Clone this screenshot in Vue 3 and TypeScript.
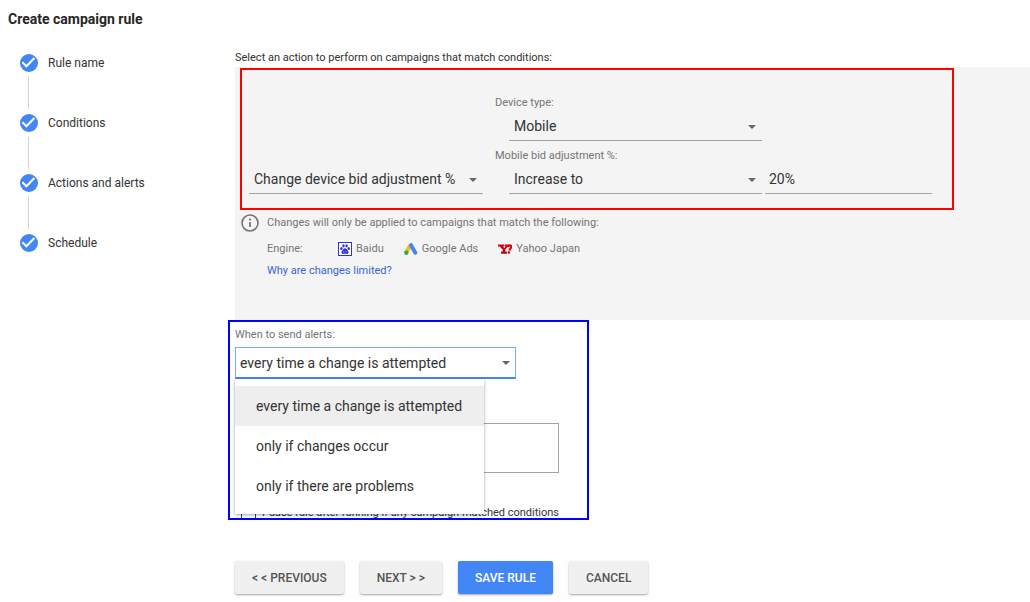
<script setup lang="ts">
import { ref } from 'vue'

const steps: string[] = ['Rule name', 'Conditions', 'Actions and alerts', 'Schedule']
const actions: string[] = ['Change device bid adjustment %']
const devices: string[] = ['Mobile', 'Desktop', 'Tablet']
const directions: string[] = ['Increase to', 'Decrease to']
const alertOptions: string[] = [
  'every time a change is attempted',
  'only if changes occur',
  'only if there are problems',
]

const action = ref(actions[0])
const device = ref(devices[0])
const direction = ref(directions[0])
const adjustment = ref('20%')
const alertTiming = ref(alertOptions[0])
const recipients = ref('')
const pauseRule = ref(false)
const menuOpen = ref(true)

function choose(option: string): void {
  alertTiming.value = option
  menuOpen.value = false
}
</script>

<template>
  <div class="page">
    <h1 class="title">Create campaign rule</h1>
    <div class="layout">
      <nav aria-label="Steps">
        <ol class="steps">
          <li v-for="step in steps" :key="step" class="step">
            <svg class="tick" viewBox="0 0 18 18" aria-hidden="true">
              <circle cx="9" cy="9" r="9" fill="#4285f4" />
              <path d="M2.4 8.3 6.4 12.3 14.4 4" fill="none" stroke="#fff" stroke-width="2" />
            </svg>
            <span>{{ step }}</span>
          </li>
        </ol>
      </nav>

      <form class="main" @submit.prevent>
        <p class="intro">Select an action to perform on campaigns that match conditions:</p>
        <section class="panel">
          <div class="action-box">
            <div class="drop action-drop">
              <select v-model="action" class="control" aria-label="Action">
                <option v-for="item in actions" :key="item">{{ item }}</option>
              </select>
            </div>
            <div class="fields">
              <label class="caption" for="device">Device type:</label>
              <div class="field-row">
                <div class="drop field-drop">
                  <select id="device" v-model="device" class="control">
                    <option v-for="item in devices" :key="item">{{ item }}</option>
                  </select>
                </div>
              </div>
              <label class="caption second" for="direction">Mobile bid adjustment %:</label>
              <div class="field-row">
                <div class="drop field-drop">
                  <select id="direction" v-model="direction" class="control">
                    <option v-for="item in directions" :key="item">{{ item }}</option>
                  </select>
                </div>
                <input v-model="adjustment" class="control percent" type="text" aria-label="Adjustment percent" />
              </div>
            </div>
          </div>

          <div class="notice">
            <svg class="info" viewBox="0 0 18 18" aria-hidden="true">
              <circle cx="9" cy="9" r="8" fill="none" stroke="#757575" stroke-width="1.6" />
              <path d="M9 8v5" stroke="#757575" stroke-width="1.8" />
              <circle cx="9" cy="5.5" r="1.1" fill="#757575" />
            </svg>
            <div class="notice-text">
              <p>Changes will only be applied to campaigns that match the following:</p>
              <div class="engines">
                <span class="engine-label">Engine:</span>
                <span class="engine">
                  <svg class="logo" viewBox="0 0 14 14" aria-hidden="true">
                    <rect x=".5" y=".5" width="13" height="13" fill="#fff" stroke="#2932e1" />
                    <g fill="#2932e1">
                      <ellipse cx="3.4" cy="6.4" rx="1.2" ry="1.5" />
                      <ellipse cx="5.5" cy="3.8" rx="1.2" ry="1.6" />
                      <ellipse cx="8.6" cy="3.8" rx="1.2" ry="1.6" />
                      <ellipse cx="10.7" cy="6.4" rx="1.2" ry="1.5" />
                      <path d="M7 6.3c1.5 0 1.7 1.3 2.7 2.2 1.3 1.2 1.2 3.3-.7 3.4-.8 0-1.2-.2-2-.2s-1.2.2-2 .2c-1.9-.1-2-2.2-.7-3.4C5.3 7.6 5.5 6.3 7 6.3z" />
                    </g>
                    <path d="M5.8 9.2v1.2M8 9.2v1.2" stroke="#fff" stroke-width=".6" />
                  </svg>
                  Baidu
                </span>
                <span class="engine">
                  <svg class="logo" viewBox="0 0 14 12" aria-hidden="true">
                    <path d="M6.3 2.3 2.5 9" stroke="#fbbc04" stroke-width="4" />
                    <path d="M7 2.2 11.3 9.7" stroke="#4285f4" stroke-width="4" stroke-linecap="round" />
                    <circle cx="2.3" cy="9.7" r="2.2" fill="#34a853" />
                  </svg>
                  Google Ads
                </span>
                <span class="engine">
                  <svg class="logo" viewBox="0 0 15 10" aria-hidden="true">
                    <path d="M0 .3h6.5v2H5.3l1.4 1.600L8.3 2.3H7.2V.3h4.6v2h-1.2L7.900 5.5v2.200H9.5v2H3.3v-2H5V5.600L1.800 2.300H0z" fill="#d8000c" />
                    <path d="M11.2 2.9C11.3.5 14.5.5 14.2 2.9 14.1 4.4 12.5 4.6 12.2 6.7" fill="none" stroke="#e0000c" stroke-width="2.2" />
                    <circle cx="11.6" cy="8.7" r="1.3" fill="#b00010" />
                    <path d="M3.3 9.3h6.2" stroke="#4b2020" />
                  </svg>
                  Yahoo Japan
                </span>
              </div>
              <a href="#limited">Why are changes limited?</a>
            </div>
          </div>
        </section>

        <section class="alerts">
          <label class="caption" for="alert-timing">When to send alerts:</label>
          <div class="alert-picker">
            <div class="drop alert-drop">
              <select id="alert-timing" v-model="alertTiming" class="control">
                <option v-for="option in alertOptions" :key="option">{{ option }}</option>
              </select>
            </div>
            <ul v-if="menuOpen" class="menu">
              <li v-for="option in alertOptions" :key="option">
                <button
                  type="button"
                  class="menu-item"
                  :class="{ selected: option === alertTiming }"
                  @click="choose(option)"
                >{{ option }}</button>
              </li>
            </ul>
          </div>
          <textarea v-model="recipients" class="recipients" aria-label="Alert recipients"></textarea>
          <label class="pause">
            <input v-model="pauseRule" type="checkbox" />
            <span>Pause rule after running if any campaign matched conditions</span>
          </label>
        </section>

        <div class="buttons">
          <button type="button">&lt; &lt; PREVIOUS</button>
          <button type="button">NEXT &gt; &gt;</button>
          <button type="submit" class="primary">SAVE RULE</button>
          <button type="button">CANCEL</button>
        </div>
      </form>
    </div>
  </div>
</template>

<style>
body {
  margin: 0;
  background: #fefefe;
}
</style>

<style scoped>
.page,
.page * {
  box-sizing: border-box;
}

.page {
  font-family: Roboto, "Liberation Sans", sans-serif;
  font-size: 12px;
  line-height: 16px;
  color: #333;
}

.title {
  margin: 0;
  padding: 11px 8px 0;
  font-size: 14px;
  line-height: 16px;
  font-weight: 700;
  color: #262626;
}

.layout {
  display: grid;
  grid-template-columns: 235px 1fr;
  padding-top: 23px;
}

.steps {
  list-style: none;
  margin: 0;
  padding: 4px 0 0 20px;
}

.step {
  display: grid;
  grid-template-columns: 18px 1fr;
  column-gap: 10px;
  align-items: center;
  font-size: 12px;
  line-height: 18px;
}

.step:not(:last-child)::after {
  content: "";
  width: 1px;
  height: 32px;
  margin: 5px 0 5px 8px;
  background: #d4d4d4;
}

.tick {
  display: block;
  width: 18px;
  height: 18px;
}

.intro {
  margin: 0;
  padding-bottom: 1px;
  font-size: 11px;
}

.panel {
  padding: 1px 0 41px 5px;
  background: #f4f4f4;
}

.action-box {
  display: flex;
  align-items: flex-end;
  gap: 12px;
  margin-right: 76px;
  padding: 25px 7px 14px;
  border: 2px solid #f00;
}

.caption {
  display: block;
  font-size: 11px;
  color: #757575;
}

.second {
  margin-top: 7px;
}

.control {
  display: block;
  width: 100%;
  height: 30px;
  margin: 0;
  padding: 0 5px;
  border: 0;
  border-bottom: 1px solid #a3a3a3;
  border-radius: 0;
  outline: none;
  appearance: none;
  background: transparent;
  color: #333;
  font-family: inherit;
  font-size: 14px;
}

.drop {
  position: relative;
}

.drop::after {
  content: "";
  position: absolute;
  top: 14px;
  right: 6px;
  border: 4px solid transparent;
  border-top-color: #666;
  border-bottom: 0;
  pointer-events: none;
}

.action-drop {
  width: 234px;
}

.field-row {
  display: flex;
  gap: 3px;
  padding-left: 14px;
}

.field-drop {
  width: 253px;
}

.percent {
  width: 167px;
  padding: 0 4px;
}

.notice {
  display: flex;
  gap: 8px;
  padding: 4px 0 0 1px;
  color: #757575;
}

.info {
  width: 18px;
  height: 18px;
}

.notice-text {
  padding-top: 1px;
}

.notice-text p {
  margin: 0;
  font-size: 11px;
}

.engines {
  display: flex;
  gap: 20px;
  padding: 10px 0 6px;
  font-size: 11px;
}

.engine-label {
  width: 51px;
}

.engine {
  display: flex;
  align-items: center;
  gap: 4px;
}

.logo {
  width: 14px;
  height: 14px;
}

a {
  display: block;
  font-size: 11px;
  color: #3367d6;
  text-decoration: none;
}

.alerts {
  width: 361px;
  height: 200px;
  margin-left: -7px;
  padding: 5px 5px 0;
  border: 2px solid #00f;
}

.alert-picker {
  position: relative;
  width: 281px;
  margin-top: 4px;
}

.alert-drop .control {
  height: 32px;
  padding: 0 4px;
  border: 1px solid #7baaf7;
  border-bottom: 2px solid #4285f4;
}

.menu {
  position: absolute;
  top: 100%;
  left: 0;
  width: 249px;
  margin: 0;
  padding: 7px 0 8px;
  list-style: none;
  background: #fff;
  box-shadow: 0 1px 3px rgba(0, 0, 0, 0.35);
}

.menu-item {
  display: block;
  width: 100%;
  height: 40px;
  padding: 0 21px;
  border: 0;
  background: transparent;
  color: #333;
  font-family: inherit;
  font-size: 14px;
  text-align: left;
}

.menu-item.selected {
  background: #eee;
}

.recipients {
  display: block;
  width: 324px;
  height: 50px;
  margin-top: 44px;
  border: 1px solid #a3a3a3;
  background: transparent;
  resize: none;
}

.pause {
  display: flex;
  align-items: flex-start;
  gap: 6px;
  margin-top: 33px;
  padding-left: 6px;
  font-size: 11px;
  line-height: 14px;
  white-space: nowrap;
}

.pause input {
  width: 15px;
  height: 12px;
  margin: 0;
  border: 1px solid #444;
  border-bottom: 0;
  appearance: none;
}

.buttons {
  display: flex;
  gap: 16px;
  padding: 41px 0 7px;
}

.buttons button {
  height: 33px;
  padding: 0 17px;
  border: 0;
  border-radius: 2px;
  background: #f0f0f0;
  box-shadow: 0 1px 2px rgba(0, 0, 0, 0.35);
  color: #555;
  font-family: inherit;
  font-size: 12px;
  font-weight: 500;
}

.buttons .primary {
  background: #4285f4;
  color: #fff;
}
</style>
